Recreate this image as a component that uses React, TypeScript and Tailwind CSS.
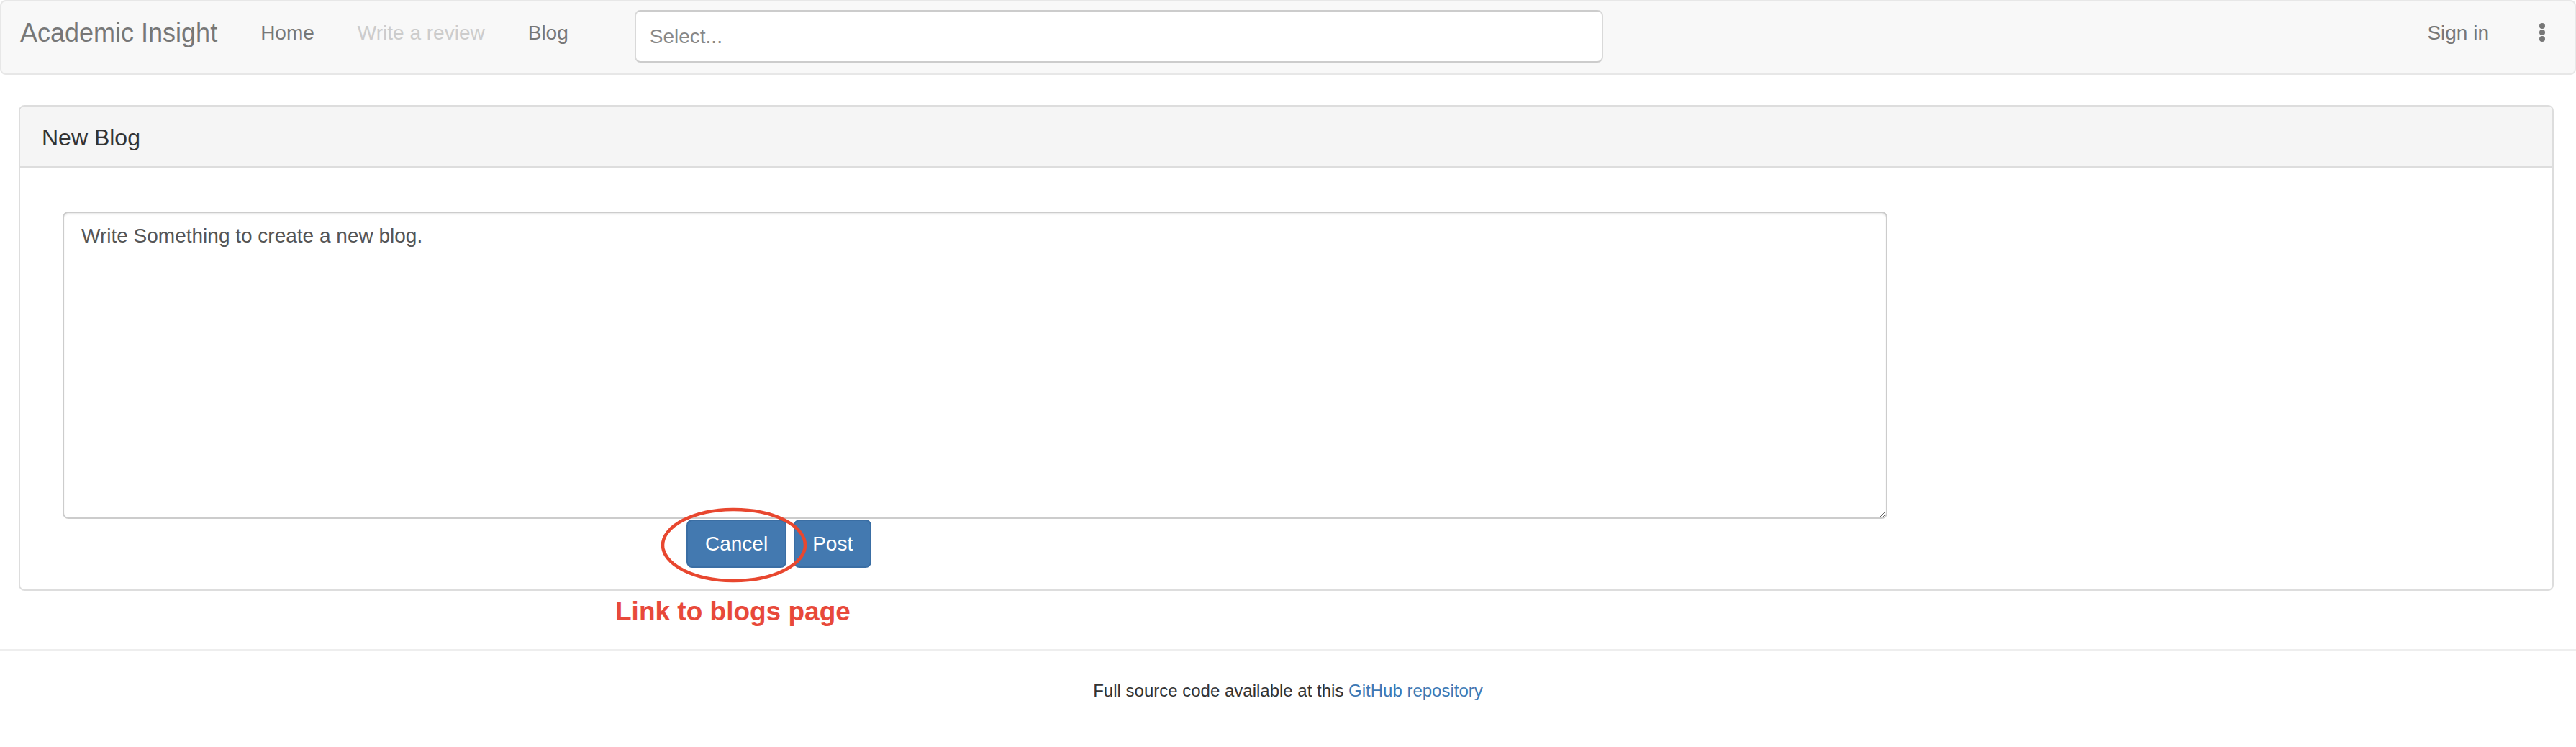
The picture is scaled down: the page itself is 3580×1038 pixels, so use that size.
const NAV_LINKS = [
  { label: 'Home', disabled: false },
  { label: 'Write a review', disabled: true },
  { label: 'Blog', disabled: false },
];

function MoreIcon() {
  return (
    <svg width="8" height="26" viewBox="0 0 8 26" className="fill-[#777]">
      <circle cx="4" cy="4" r="4" />
      <circle cx="4" cy="13" r="4" />
      <circle cx="4" cy="22" r="4" />
    </svg>
  );
}

function Navbar() {
  return (
    <nav className="h-[104px] bg-[#f8f8f8] border-2 border-[#e7e7e7] rounded-[8px] flex items-start">
      <a className="mt-[24px] pl-[26px] pr-[30px] text-[36px] leading-[40px] text-[#777] whitespace-nowrap">
        Academic Insight
      </a>
      {NAV_LINKS.map((link) => (
        <a
          key={link.label}
          className={`mt-[24px] px-[30px] text-[28px] leading-[40px] whitespace-nowrap ${
            link.disabled ? 'text-[#ccc]' : 'text-[#777]'
          }`}
        >
          {link.label}
        </a>
      ))}

      {/* search select */}
      <div className="mt-[12px] ml-[62px] w-[1346px] h-[73px] bg-white border-2 border-[#ccc] border-l-[#d9d9d9] border-r-[#d9d9d9] rounded-[8px] flex items-center pl-[19px]">
        <span className="text-[28px] leading-[40px] text-[#888]">Select...</span>
      </div>

      <a className="ml-auto mt-[24px] text-[28px] leading-[40px] text-[#777]">Sign in</a>
      <div className="mt-[30px] ml-[70px] mr-[41px]">
        <MoreIcon />
      </div>
    </nav>
  );
}

export default function App() {
  return (
    <div className="min-h-screen bg-white text-[#333] font-['Liberation_Sans',Arial,sans-serif]">
      <Navbar />

      {/* Panel */}
      <div className="mt-[42px] ml-[26px] mr-[31px] border-2 border-[#ddd] rounded-[8px] bg-white">
        <div className="bg-[#f5f5f5] border-b-2 border-[#ddd] rounded-t-[6px] pt-[20px] pb-[17px] px-[30px]">
          <h3 className="text-[32px] leading-[46px] text-[#333]">New Blog</h3>
        </div>
        <div className="pt-[61px] pb-[30px] pl-[59px]">
          <textarea
            defaultValue="Write Something to create a new blog."
            className="block w-[2536px] h-[427px] border-2 border-[#ccc] rounded-[8px] px-[24px] py-[12px] text-[28px] leading-[40px] text-[#555] shadow-[inset_0_2px_2px_rgba(0,0,0,0.075)] outline-none"
          />
          <div className="relative mt-[1px] flex gap-[10px] pl-[867px]">
            <button className="h-[67px] px-[24px] bg-[#4379b0] border-2 border-[#3a6ea4] rounded-[8px] text-white text-[28px] leading-[40px]">
              Cancel
            </button>
            <button className="h-[67px] px-[24px] bg-[#4379b0] border-2 border-[#3a6ea4] rounded-[8px] text-white text-[28px] leading-[40px]">
              Post
            </button>

            {/* annotation */}
            <svg
              width="204"
              height="105"
              viewBox="0 0 204 105"
              className="absolute left-[831px] top-[-17px] pointer-events-none"
            >
              <ellipse cx="102" cy="52.5" rx="99" ry="49.5" fill="none" stroke="#e8472f" strokeWidth="4.5" />
            </svg>
            <span className="absolute left-[768px] top-[110px] text-[37px] leading-[36px] font-bold text-[#e8493a] whitespace-nowrap">
              Link to blogs page
            </span>
          </div>
        </div>
      </div>

      {/* Footer */}
      <footer className="mt-[81px] border-t-2 border-[#eee] pt-[39px] pb-[40px] text-center text-[24px] leading-[34px] text-[#333]">
        Full source code available at this <a className="text-[#3d79b5]">GitHub repository</a>
      </footer>
    </div>
  );
}
